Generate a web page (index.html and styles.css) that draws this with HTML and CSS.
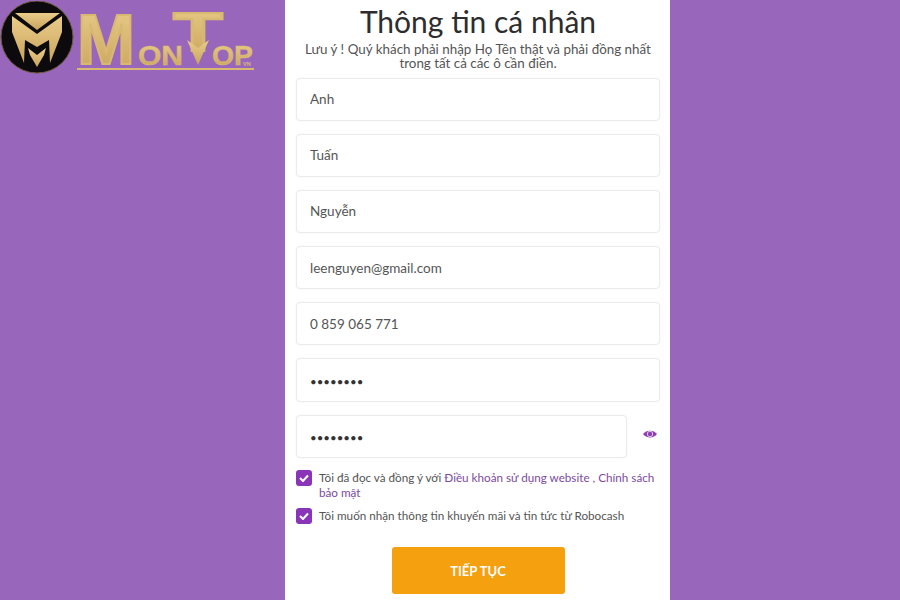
FILE: index.html
```html
<!DOCTYPE html>
<html lang="vi">
<head>
  <meta charset="UTF-8">
  <title>Thông tin cá nhân</title>
  <link rel="stylesheet" href="styles.css">
</head>
<body>
  <div class="page">
    <div class="brand">
      <svg class="logo" width="260" height="80" viewBox="0 0 260 80">
        <defs>
          <linearGradient id="gold" x1="0" y1="0" x2="0" y2="1">
            <stop offset="0" stop-color="#e9cd8a"/>
            <stop offset="1" stop-color="#c9a35c"/>
          </linearGradient>
        </defs>
        <circle cx="37" cy="36" r="36" fill="#0c0a0c" stroke="#6d5a3c"/>
        <path d="M15 12 L60 12 L37 29 Z" fill="url(#gold)"/>
        <path d="M12 15 L37 33 L62 15 L62 31 L50 62 L49 39 L37 46 L25 39 L24 62 L12 31 Z" fill="url(#gold)"/>
        <path d="M28 47 L37 54 L46 47 L44 54 L37 66 L30 54 Z" fill="url(#gold)"/>
        <text class="logo-big" x="77" y="63" textLength="58" lengthAdjust="spacingAndGlyphs">M</text>
        <text class="logo-small" x="138" y="64" textLength="45" lengthAdjust="spacingAndGlyphs">ON</text>
        <text class="logo-big logo-t" x="173" y="50" textLength="50" lengthAdjust="spacingAndGlyphs">T</text>
        <path d="M187 39 L198 47 L209 39 L198 64 Z" fill="url(#gold)"/>
        <text class="logo-small" x="212" y="64" textLength="41" lengthAdjust="spacingAndGlyphs">OP</text>
        <text class="logo-vn" x="243" y="65">VN</text>
        <rect x="77" y="67" width="177" height="2" fill="#d9b970"/>
      </svg>
    </div>

    <form class="card">
      <h1>Thông tin cá nhân</h1>
      <p class="note">Lưu ý ! Quý khách phải nhập Họ Tên thật và phải đồng nhất trong tất cả các ô cần điền.</p>

      <input class="field" type="text" value="Anh">
      <input class="field" type="text" value="Tuấn">
      <input class="field" type="text" value="Nguyễn">
      <input class="field" type="text" value="leenguyen@gmail.com">
      <input class="field" type="text" value="0 859 065 771">
      <input class="field dots" type="password" value="12345678">
      <div class="pass-row">
        <input class="field dots" type="password" value="12345678">
        <svg class="eye" width="14" height="10" viewBox="0 0 14 10">
          <path d="M0 5 C3 0.5 11 0.5 14 5 C11 9.5 3 9.5 0 5 Z" fill="#8e3fb0"/>
          <circle cx="7" cy="5" r="3" fill="#e9d8f2"/>
          <circle cx="7" cy="5" r="2.2" fill="#8e3fb0"/>
        </svg>
      </div>

      <div class="check-row first">
        <span class="check">
          <svg width="10" height="8" viewBox="0 0 10 8"><path d="M1 4 L4 7 L9 1.5" fill="none" stroke="#fff" stroke-width="2"/></svg>
        </span>
        <span>Tôi đã đọc và đồng ý với <a href="#">Điều khoản sử dụng website , Chính sách bảo mật</a></span>
      </div>
      <div class="check-row">
        <span class="check">
          <svg width="10" height="8" viewBox="0 0 10 8"><path d="M1 4 L4 7 L9 1.5" fill="none" stroke="#fff" stroke-width="2"/></svg>
        </span>
        <span>Tôi muốn nhận thông tin khuyến mãi và tin tức từ Robocash</span>
      </div>

      <button class="next" type="button">TIẾP TỤC</button>
    </form>
  </div>
</body>
</html>
```

FILE: styles.css
```css
html, body {
  margin: 0;
  height: 600px;
  overflow: hidden;
  background-color: #9866bb;
  font-family: "Lato", "Noto Sans", sans-serif;
}

.page {
  display: grid;
  grid-template-columns: 285px 385px 230px;
  height: 600px;
}

.logo {
  display: block;
  margin-top: 1px;
}

.logo text {
  fill: url(#gold);
  font-family: "Liberation Sans", sans-serif;
  font-weight: bold;
}

.logo .logo-big {
  font-size: 70px;
  stroke: #d9b970;
  stroke-width: 2px;
}

.logo .logo-t {
  font-size: 56px;
}

.logo .logo-small {
  font-size: 28px;
  stroke: #d9b970;
  stroke-width: 0.5px;
}

.logo .logo-vn {
  font-size: 5.5px;
}

.card {
  background: white;
  padding: 0 10px 0 11px;
  display: flex;
  flex-direction: column;
}

h1 {
  margin: 3px 0 0;
  font-size: 30px;
  line-height: 36px;
  font-weight: 400;
  text-align: center;
  color: #2d2d2d;
}

.note {
  margin: 3px 8px 7.5px;
  font-size: 13.4px;
  line-height: 14px;
  text-align: center;
  color: #555;
}

.field {
  box-sizing: border-box;
  width: 100%;
  height: 43.2px;
  margin-bottom: 13px;
  padding: 0 13px;
  border: 1px solid #ebebeb;
  border-radius: 4px;
  font-family: inherit;
  font-size: 13.5px;
  color: #555;
  background: white;
  box-shadow: 0 0 2px rgba(0, 0, 0, 0.05);
}

.dots {
  padding-top: 3px;
  color: #333;
  font-size: 11.5px;
}

.pass-row {
  display: flex;
  align-items: flex-start;
  gap: 16px;
}

.pass-row .field {
  width: 331px;
  margin-bottom: 12px;
}

.eye {
  margin-top: 14px;
}

.check-row {
  display: flex;
  gap: 7px;
  margin-bottom: 8px;
  font-size: 11.7px;
  line-height: 15px;
  color: #555;
}

.check {
  flex: none;
  width: 16px;
  height: 16px;
  border-radius: 3px;
  background-color: #8a35b8;
  display: flex;
  align-items: center;
  justify-content: center;
}

a {
  color: #7d4a9e;
  text-decoration: none;
}

.next {
  align-self: center;
  width: 173px;
  height: 47px;
  margin-top: 15.5px;
  border: none;
  border-radius: 3px;
  background-color: #f5a00f;
  color: white;
  font-family: inherit;
  font-size: 13px;
  font-weight: bold;
}
```
